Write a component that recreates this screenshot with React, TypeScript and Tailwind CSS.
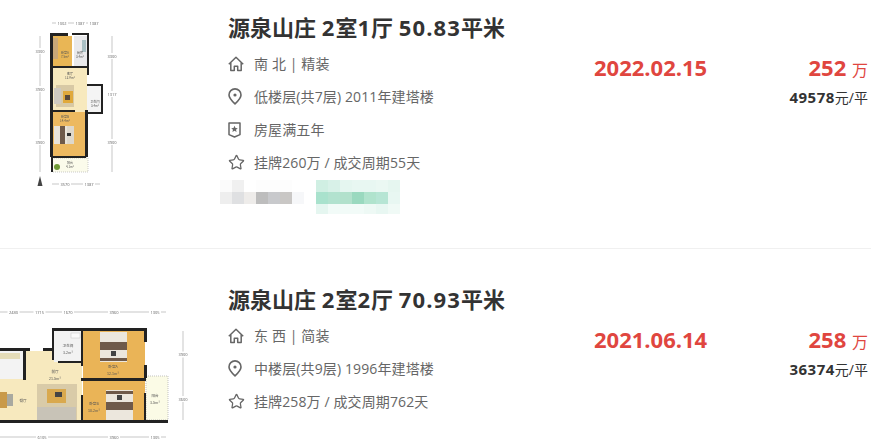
import { Star } from 'lucide-react';

const font = { fontFamily: '"Open Sans", "Noto Sans CJK SC", sans-serif' };

function HomeIcon() {
  return (
    <svg width="16" height="16" viewBox="0 0 16 16" fill="none" stroke="#666" strokeWidth="1.5" strokeLinejoin="round">
      <path d="M.8 8.2 8 1.2l7.2 7" />
      <path d="M2.8 6.8v7.8h3.5v-4.4h3.4v4.4h3.5V6.8" />
    </svg>
  );
}

function PinIcon() {
  return (
    <svg width="14" height="17" viewBox="0 0 14 17" fill="none" stroke="#666" strokeWidth="1.6">
      <path d="M7 15.8C3.6 12.6 1 10 1 6.9a6 6 0 0 1 12 0c0 3.1-2.6 5.7-6 8.9Z" strokeLinejoin="round" />
      <circle cx="7" cy="7" r="1.6" fill="#666" stroke="none" />
    </svg>
  );
}

function ShieldIcon() {
  return (
    <svg width="13" height="16" viewBox="0 0 13 16" fill="none">
      <path d="M1 1h11v11.6l-5.5 2.4L1 12.6Z" stroke="#666" strokeWidth="1.5" strokeLinejoin="round" />
      <path d="m6.5 3.8 1 2.2 2.3.2-1.8 1.5.6 2.3-2.1-1.2-2.1 1.2.6-2.3-1.8-1.5 2.3-.2Z" fill="#666" />
    </svg>
  );
}

function InfoRow({ icon, text }: { icon: React.ReactNode; text: string }) {
  return (
    <div className="flex h-[33px] items-center">
      <div className="flex w-[26px] shrink-0 items-center">{icon}</div>
      <span className="text-[14px] tracking-[0.12px] text-[#666]">{text}</span>
    </div>
  );
}

// dimension line with its tiny label
function Dim({ x1, y1, x2, y2, label }: { x1: number; y1: number; x2: number; y2: number; label?: string }) {
  const mx = (x1 + x2) / 2;
  const my = (y1 + y2) / 2;
  return (
    <g>
      <line x1={x1} y1={y1} x2={x2} y2={y2} stroke="#8f8f8f" strokeWidth="0.5" />
      {label && (
        <>
          <rect x={mx - 6} y={my - 3} width="12" height="6" fill="#fff" />
          <text x={mx} y={my + 1.5} fontSize="4" fill="#666" textAnchor="middle">
            {label}
          </text>
        </>
      )}
    </g>
  );
}

function Plan1() {
  return (
    <svg width="228" height="248" viewBox="0 0 228 248" className="blur-[0.7px]">
      <Dim x1={52} y1={23} x2={72} y2={23} label="1002" />
      <Dim x1={72} y1={23} x2={88} y2={23} label="1387" />
      <Dim x1={88} y1={23} x2={100} y2={23} label="1387" />
      <Dim x1={40} y1={36} x2={40} y2={66} label="3300" />
      <Dim x1={40} y1={66} x2={40} y2={112} label="3900" />
      <Dim x1={40} y1={112} x2={40} y2={172} label="3900" />
      <Dim x1={112} y1={36} x2={112} y2={76} label="3300" />
      <Dim x1={112} y1={76} x2={112} y2={112} label="1317" />
      <Dim x1={112} y1={112} x2={112} y2={172} label="3900" />
      <Dim x1={52} y1={184} x2={78} y2={184} label="3570" />
      <Dim x1={78} y1={184} x2={100} y2={184} label="1387" />
      <rect x="53" y="36" width="19" height="31" fill="#e9b655" />
      <rect x="53" y="38" width="5" height="21" fill="#c9a878" />
      <rect x="74" y="36" width="13" height="31" fill="#e9e9eb" />
      <rect x="82" y="40" width="4" height="12" fill="#a9c0c4" />
      <rect x="53" y="68" width="34" height="44" fill="#f7e9be" />
      <rect x="56" y="85" width="18" height="22" fill="#d8c9a5" />
      <rect x="63" y="91" width="10" height="12" fill="#e0a93b" />
      <rect x="65" y="95" width="5" height="5" fill="#5a4a3a" />
      <rect x="54" y="88" width="7" height="16" fill="#cfcac0" />
      <rect x="87" y="86" width="14" height="26" fill="#f4f4f4" />
      <rect x="53" y="112" width="33" height="44" fill="#edb960" />
      <rect x="54" y="126" width="20" height="18" fill="#e9e4da" />
      <rect x="60" y="126" width="5" height="18" fill="#6f5a4a" />
      <rect x="67" y="126" width="7" height="18" fill="#ded8cc" />
      <rect x="67" y="133" width="4" height="3" fill="#333" />
      <rect x="52" y="158" width="36" height="14" fill="#fbfbeb" stroke="#aaa" strokeWidth="0.6" strokeDasharray="1 1" />
      <circle cx="57" cy="167" r="3" fill="#6f9a35" />
      <g fill="#222">
        <rect x="50" y="33" width="3" height="124" />
        <rect x="51" y="157" width="2" height="15" />
        <rect x="50" y="33" width="18" height="3" />
        <rect x="72" y="33" width="17" height="2" />
        <rect x="87" y="33" width="2" height="42" />
        <rect x="53" y="66" width="34" height="2" />
        <rect x="87" y="84" width="16" height="2" />
        <rect x="101" y="84" width="2" height="30" />
        <rect x="85" y="112" width="18" height="2" />
        <rect x="85" y="110" width="3" height="47" />
        <rect x="53" y="110" width="22" height="2" />
        <rect x="53" y="156" width="33" height="2" />
      </g>
      <path d="M40 176l-2.5 10h5Z" fill="#444" />
      <g fill="#555" fontSize="3" textAnchor="middle" fontFamily='"Noto Sans CJK SC", sans-serif'>
        <text x="65" y="54">卧室A</text>
        <text x="65" y="58">7.5m²</text>
        <text x="80" y="54">厨房</text>
        <text x="80" y="58">3.4m²</text>
        <text x="70" y="75">客厅</text>
        <text x="70" y="79">12.9m²</text>
        <text x="95" y="103">卫生间</text>
        <text x="95" y="107">3.4m²</text>
        <text x="65" y="118">卧室B</text>
        <text x="65" y="122">14.4m²</text>
        <text x="70" y="164">阳台</text>
        <text x="70" y="168">4.1m²</text>
      </g>
    </svg>
  );
}

function Plan2() {
  return (
    <svg width="228" height="192" viewBox="0 249 228 192" className="blur-[0.7px]">
      <Dim x1={0} y1={312} x2={27} y2={312} label="2480" />
      <Dim x1={27} y1={312} x2={52} y2={312} label="1715" />
      <Dim x1={52} y1={312} x2={84} y2={312} label="1670" />
      <Dim x1={84} y1={312} x2={144} y2={312} label="3960" />
      <Dim x1={144} y1={312} x2={166} y2={312} label="1305" />
      <Dim x1={0} y1={437} x2={84} y2={437} label="6105" />
      <Dim x1={84} y1={437} x2={144} y2={437} label="3960" />
      <Dim x1={144} y1={437} x2={166} y2={437} label="1305" />
      <Dim x1={183} y1={331} x2={183} y2={378} label="3900" />
      <Dim x1={183} y1={378} x2={183} y2={420} label="3600" />
      <rect x="0" y="351" width="82" height="69" fill="#f7e9be" />
      <rect x="54" y="331" width="28" height="31" fill="#f2f2f2" />
      <rect x="71" y="333" width="9" height="5" fill="#fafafa" stroke="#bbb" strokeWidth="0.4" />
      <rect x="0" y="351" width="24" height="28" fill="#f3f3f3" />
      <rect x="0" y="353" width="20" height="6" fill="#e4dcb8" />
      <rect x="37" y="384" width="40" height="36" fill="#d9cba8" />
      <rect x="47" y="389" width="19" height="14" fill="#d9a94e" />
      <rect x="55" y="392" width="7" height="5" fill="#444" />
      <rect x="37" y="407" width="39" height="13" fill="#c8c3b7" />
      <rect x="0" y="392" width="7" height="16" fill="#c99a4a" />
      <rect x="7" y="394" width="6" height="12" fill="#a9a9a0" />
      <rect x="83" y="331" width="62" height="47" fill="#eab457" />
      <rect x="83" y="381" width="62" height="39" fill="#eab457" />
      <rect x="146" y="376" width="22" height="44" fill="#fbfbe6" stroke="#aaa" strokeWidth="0.7" strokeDasharray="1 1" />
      <rect x="100" y="332" width="27" height="30" fill="#ece7dd" />
      <rect x="100" y="342" width="27" height="8" fill="#6f5a4a" />
      <rect x="100" y="358" width="27" height="3" fill="#6f5a4a" />
      <rect x="111" y="351" width="5" height="5" fill="#444" />
      <rect x="106" y="390" width="27" height="30" fill="#ece7dd" />
      <rect x="106" y="391" width="27" height="3" fill="#6f5a4a" />
      <rect x="106" y="402" width="27" height="8" fill="#6f5a4a" />
      <rect x="117" y="395" width="5" height="5" fill="#444" />
      <g fill="#222">
        <rect x="52" y="328" width="95" height="3" />
        <rect x="52" y="328" width="2" height="32" />
        <rect x="0" y="348" width="30" height="3" />
        <rect x="43" y="348" width="11" height="3" />
        <rect x="23" y="351" width="3" height="29" />
        <rect x="81" y="331" width="2" height="35" />
        <rect x="58" y="361" width="24" height="2" />
        <rect x="144" y="331" width="3" height="11" />
        <rect x="144" y="365" width="3" height="13" />
        <rect x="81" y="378" width="65" height="3" />
        <rect x="81" y="395" width="2" height="25" />
        <rect x="144" y="393" width="2" height="27" />
        <rect x="0" y="420" width="168" height="3" />
      </g>
      <g fill="#555" fontSize="3.6" textAnchor="middle" fontFamily='"Noto Sans CJK SC", sans-serif'>
        <text x="68" y="347">卫生间</text>
        <text x="68" y="354">3.2m²</text>
        <text x="55" y="373">前厅</text>
        <text x="55" y="380">21.5m²</text>
        <text x="23" y="402">餐厅</text>
        <text x="113" y="368">卧室A</text>
        <text x="113" y="375">12.1m²</text>
        <text x="94" y="405">卧室B</text>
        <text x="94" y="412">10.2m²</text>
        <text x="155" y="397">阳台</text>
        <text x="155" y="404">3.5m²</text>
      </g>
    </svg>
  );
}

// blurred-out agent tags, mosaic cells are 12px
const grayCells = [
  ['#fbfbfb', '#f0f0f0', '#ffffff', '#fdfdfd', '#fdfdfd', '#fdfdfd', '#ffffff'],
  ['#eeeeee', '#dfe0e2', '#eeecea', '#bdbdbd', '#c8c9cc', '#c9c7c5', '#f6f7f9'],
];
const greenCells = [
  ['#d0efe3', '#d8f1e8', '#e5f6f0', '#e8f7f2', '#e8f7f2', '#ebf8f3', '#e6f6f0'],
  ['#a9e2cd', '#b2e2cf', '#b2e1cc', '#9ad9bf', '#b0e3cd', '#b6e5d4', '#e8f7f2'],
  ['#e5f6f0', '#f2fbf8', '#f2fbf8', '#f2fbf8', '#eef9f5', '#e8f7f2', '#f0faf6'],
];

function Mosaic() {
  return (
    <svg width="190" height="36" viewBox="0 0 190 36" shapeRendering="crispEdges" className="ml-[-8px] mt-[1px] block">
      {grayCells.map((row, r) =>
        row.map((c, i) => <rect key={`g${r}-${i}`} x={i * 12} y={r * 12} width="12" height="12" fill={c} />)
      )}
      {greenCells.map((row, r) =>
        row.map((c, i) => <rect key={`n${r}-${i}`} x={96 + i * 12} y={r * 12} width="12" height={r === 2 ? 10 : 12} fill={c} />)
      )}
    </svg>
  );
}

function Stats({ date, price, unit }: { date: string; price: string; unit: string }) {
  return (
    <>
      <div className="w-[205px] shrink-0 pl-[84px] text-[22px] leading-[28px] font-bold text-[#e0463f]">{date}</div>
      <div className="flex-1 pr-[3px] text-right">
        <div className="h-[28px] text-[22px] leading-[28px] font-bold text-[#e0463f]">
          {price} <span className="text-[16px] font-normal">万</span>
        </div>
        <div className="mt-[6px] text-[14px] leading-[20px] text-[#333]">
          <span className="text-[15px] font-bold tracking-[0.5px]">{unit}</span>元/平
        </div>
      </div>
    </>
  );
}

// digits in the title run a bit wider than the hanzi
function Num({ children }: { children: React.ReactNode }) {
  return <span className="tracking-[1.1px]">{children}</span>;
}

const titleCls = 'text-[22px] leading-[30px] font-bold text-[#333]';

export default function App() {
  return (
    <div className="h-[441px] w-[877px] overflow-hidden bg-white" style={font}>
      <div className="h-[249px] w-[871px] border-b border-[#f0f0f0]">
        <div className="flex">
          <div className="w-[228px] shrink-0">
            <Plan1 />
          </div>
          <div className="w-[282px] shrink-0 pt-[12px]">
            <div className={titleCls}>
              源泉山庄 <Num>2</Num>室<Num>1</Num>厅 <Num>50.83</Num>平米
            </div>
            <div className="mt-[5px]">
              <InfoRow icon={<HomeIcon />} text="南 北 | 精装" />
              <InfoRow icon={<PinIcon />} text="低楼层(共7层) 2011年建塔楼" />
              <InfoRow icon={<ShieldIcon />} text="房屋满五年" />
              <InfoRow icon={<Star size={17} color="#666" strokeWidth={1.8} />} text="挂牌260万 / 成交周期55天" />
            </div>
            <Mosaic />
          </div>
          <div className="flex flex-1 pt-[53px]">
            <Stats date="2022.02.15" price="252" unit="49578" />
          </div>
        </div>
      </div>
      <div className="flex w-[871px]">
        <div className="w-[228px] shrink-0">
          <Plan2 />
        </div>
        <div className="w-[282px] shrink-0 pt-[35px]">
          <div className={titleCls}>
            源泉山庄 <Num>2</Num>室<Num>2</Num>厅 <Num>70.93</Num>平米
          </div>
          <div className="mt-[5px]">
            <InfoRow icon={<HomeIcon />} text="东 西 | 简装" />
            <InfoRow icon={<PinIcon />} text="中楼层(共9层) 1996年建塔楼" />
            <InfoRow icon={<Star size={17} color="#666" strokeWidth={1.8} />} text="挂牌258万 / 成交周期762天" />
          </div>
        </div>
        <div className="flex flex-1 pt-[76px]">
          <Stats date="2021.06.14" price="258" unit="36374" />
        </div>
      </div>
    </div>
  );
}
